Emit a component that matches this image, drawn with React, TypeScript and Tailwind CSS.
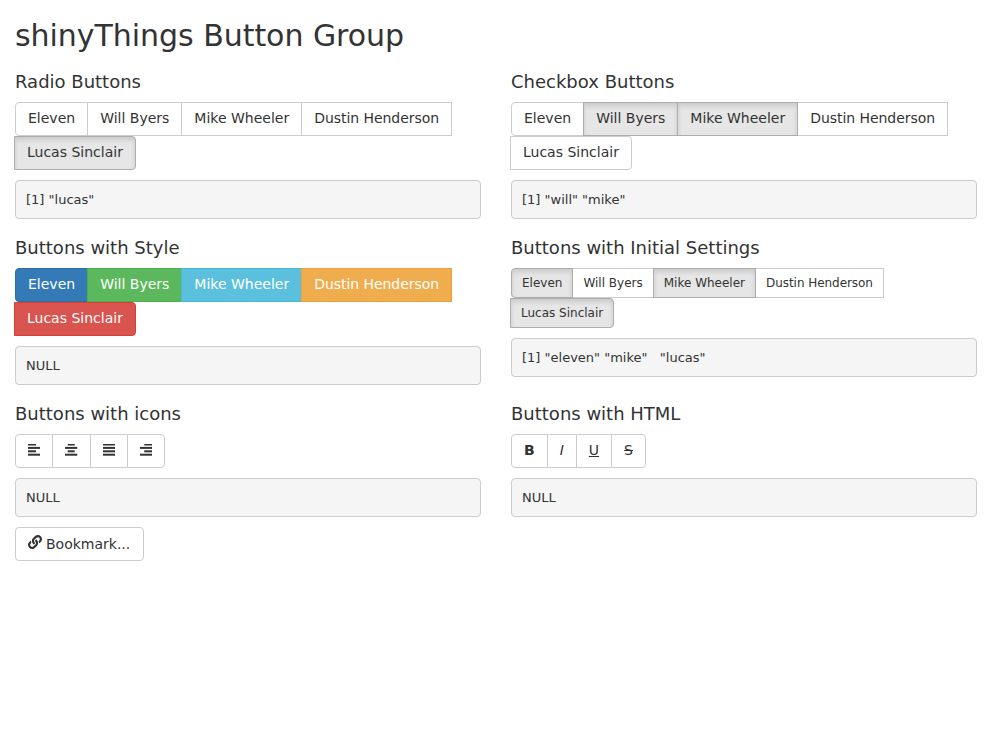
import React from "react";
import { FaLink } from "react-icons/fa";

const base = "relative -ml-px first:ml-0 border text-center whitespace-nowrap first:rounded-l last:rounded-r";
const md = "px-3 pt-[5.5px] pb-[6.5px] text-[14px] leading-[20px]";
const sm = "px-[10px] pt-[5.5px] pb-[4.5px] text-[12px] leading-[18px]";
const plain = "bg-white border-[#cccccc] text-[#333333]";
const active = "z-10 bg-[#e6e6e6] border-[#adadad] text-[#333333] shadow-[inset_0_3px_5px_rgba(0,0,0,0.125)]";
const names = ["Eleven", "Will Byers", "Mike Wheeler", "Dustin Henderson", "Lucas Sinclair"];

function Group({ sel, small }: { sel: number[]; small?: boolean }) {
  return (
    <div className="flex flex-wrap">
      {names.map((n, i) => (
        <div
          key={n}
          className={`${base} ${small ? sm : md} ${sel.includes(i) ? active : plain} ${i === 3 ? "tracking-[-0.05px]" : ""}`}
        >
          {n}
        </div>
      ))}
    </div>
  );
}

function StyledGroup() {
  const colors = [
    "bg-[#337ab7] border-[#2e6da4]",
    "bg-[#5cb85c] border-[#4cae4c]",
    "bg-[#5bc0de] border-[#46b8da]",
    "bg-[#f0ad4e] border-[#eea236]",
    "bg-[#d9534f] border-[#d43f3a]",
  ];
  return (
    <div className="flex flex-wrap">
      {names.map((n, i) => (
        <div key={n} className={`${base} ${md} ${colors[i]} text-white ${i === 3 ? "tracking-[-0.05px]" : ""}`}>
          {n}
        </div>
      ))}
    </div>
  );
}

function Pre({ children }: { children: React.ReactNode }) {
  return (
    <pre className="mt-[10px] mb-[10px] h-[39.3px] whitespace-pre rounded border border-[#cccccc] bg-[#f5f5f5] px-[10px] pt-[10.5px] pb-[8.5px] text-[13px] leading-[18.57px] text-[#333333] [font-family:'DejaVu_Sans',sans-serif]">
      {children}
    </pre>
  );
}

function Heading({ children }: { children: React.ReactNode }) {
  return <h3 className="mt-[10.25px] mb-[9.75px] text-[18px] leading-[18.7px] font-normal text-[#333333]">{children}</h3>;
}

function AlignIcon({ rows }: { rows: [number, number][] }) {
  return (
    <svg width="12.25" height="14" viewBox="0 0.5 12.25 14" className="block" fill="#333333">
      {rows.map(([x, w], i) => (
        <rect key={i} x={x} y={i * 3.4} width={w} height="2" />
      ))}
    </svg>
  );
}

const iconRows: [number, number][][] = [
  [[0, 8], [0, 12.25], [0, 8], [0, 12.25]],
  [[2.7, 7], [0, 12.25], [2.7, 7], [0, 12.25]],
  [[0, 12.25], [0, 12.25], [0, 12.25], [0, 12.25]],
  [[4.25, 8], [0, 12.25], [4.25, 8], [0, 12.25]],
];

function IconGroup() {
  return (
    <div className="flex flex-wrap">
      {iconRows.map((r, i) => (
        <div key={i} className={`${base} ${plain} h-[34px] px-3 flex items-center`}>
          <AlignIcon rows={r} />
        </div>
      ))}
    </div>
  );
}

function HtmlGroup() {
  return (
    <div className="flex flex-wrap">
      <div className={`${base} ${md} ${plain}`}><b>B</b></div>
      <div className={`${base} ${md} ${plain}`}><i>I</i></div>
      <div className={`${base} ${md} ${plain}`}><u>U</u></div>
      <div className={`${base} ${md} ${plain}`}><s>S</s></div>
    </div>
  );
}

export default function App() {
  return (
    <div className="min-h-[744px] bg-white px-[15px] text-[14px] text-[#333333] [font-family:'DejaVu_Sans',sans-serif]">
      <h2 className="mt-[19px] mb-[10px] text-[30px] leading-[34px] tracking-[-0.04px] font-normal">shinyThings Button Group</h2>
      <div className="grid grid-cols-2 gap-x-[30px]">
        <section>
          <Heading>Radio Buttons</Heading>
          <Group sel={[4]} />
          <Pre>{'[1] "lucas"'}</Pre>
        </section>
        <section>
          <Heading>Checkbox Buttons</Heading>
          <Group sel={[1, 2]} />
          <Pre>{'[1] "will" "mike"'}</Pre>
        </section>
        <section>
          <Heading>Buttons with Style</Heading>
          <StyledGroup />
          <Pre>NULL</Pre>
        </section>
        <section>
          <Heading>Buttons with Initial Settings</Heading>
          <Group sel={[0, 2, 4]} small />
          <Pre>{'[1] "eleven" "mike"   "lucas"'}</Pre>
        </section>
        <section>
          <Heading>Buttons with icons</Heading>
          <IconGroup />
          <Pre>NULL</Pre>
          <div className="inline-flex items-center rounded border border-[#cccccc] bg-white pl-3 pr-[12.6px] pt-[5.5px] pb-[6.5px] text-[14px] leading-[20px] text-[#333333]">
            <FaLink size={14} color="#333333" className="mr-[4px] -mt-[3px]" />
            Bookmark...
          </div>
        </section>
        <section>
          <Heading>Buttons with HTML</Heading>
          <HtmlGroup />
          <Pre>NULL</Pre>
        </section>
      </div>
    </div>
  );
}
